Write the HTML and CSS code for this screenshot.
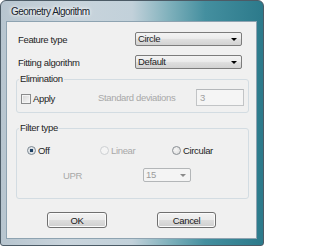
FILE: index.html
```html
<!DOCTYPE html>
<html>
<head>
<meta charset="utf-8">
<link rel="stylesheet" href="styles.css">
</head>
<body>
<div class="window">
  <div class="titlebar"><span class="title">Geometry Algorithm</span></div>
  <div class="client">
    <div class="field-row">
      <span class="label">Feature type</span>
      <div class="combo"><span>Circle</span><i class="arrow"></i></div>
    </div>
    <div class="field-row second">
      <span class="label">Fitting algorithm</span>
      <div class="combo"><span>Default</span><i class="arrow"></i></div>
    </div>
    <fieldset class="group elim">
      <legend>Elimination</legend>
      <div class="elim-row">
        <span class="check"><span class="box"></span><span>Apply</span></span>
        <span class="disabled std">Standard deviations</span>
        <div class="textbox">3</div>
      </div>
    </fieldset>
    <fieldset class="group filter">
      <legend>Filter type</legend>
      <div class="radio-row">
        <span class="radio-item"><span class="radio checked"></span><span>Off</span></span>
        <span class="radio-item disabled"><span class="radio dis"></span><span>Linear</span></span>
        <span class="radio-item"><span class="radio"></span><span>Circular</span></span>
      </div>
      <div class="upr-row">
        <span class="disabled upr">UPR</span>
        <div class="combo small off"><span>15</span><i class="arrow"></i></div>
      </div>
    </fieldset>
    <div class="buttons">
      <div class="btn ok">OK</div>
      <div class="btn cancel">Cancel</div>
    </div>
  </div>
</div>
</body>
</html>
```

FILE: styles.css
```css
* { box-sizing: border-box; }
html, body { margin: 0; padding: 0; }
body {
  width: 264px;
  height: 246px;
  overflow: hidden;
  font-family: "Liberation Sans", Arial, sans-serif;
  font-size: 9.5px;
  letter-spacing: -0.35px;
  color: #1e1e1e;
}
.window {
  width: 264px;
  height: 246px;
  border: 1px solid #4c5b66;
  border-radius: 6px 6px 3px 3px;
  padding: 0 6px 6px 5px;
  display: flex;
  flex-direction: column;
  background:
    linear-gradient(90deg, #b7c5cf 0%, #c9d4dc 25%, #c2d1da 50%, #80b1bc 64%, #448f9f 78%, #2c7a8b 100%);
}
.titlebar {
  height: 20px;
  display: flex;
  align-items: center;
  padding-left: 5px;
  padding-top: 1px;
}
.title {
  font-size: 10px;
  letter-spacing: -0.55px;
  color: #17232c;
  text-shadow: 0 0 5px #ffffff, 0 0 3px #ffffff;
}
.client {
  flex: 1;
  background: #f0f0f0;
  border: 1px solid #8ea3b1;
  padding: 10px 7px 0 9px;
}
.field-row {
  display: grid;
  grid-template-columns: 119px 107px;
  align-items: center;
  height: 14px;
}
.field-row.second { margin-top: 9px; }
.label { padding-left: 2px; }
.combo {
  height: 14px;
  border: 1px solid #7c7c7c;
  border-radius: 2px;
  background: linear-gradient(#f3f3f3 0%, #ececec 45%, #dedede 55%, #d2d2d2 100%);
  display: flex;
  align-items: center;
  justify-content: space-between;
  padding: 0 4px 0 2px;
  line-height: 12px;
}
.arrow {
  width: 0;
  height: 0;
  border-left: 3px solid transparent;
  border-right: 3px solid transparent;
  border-top: 3px solid #000;
}
.combo.small { width: 48px; }
.combo.off {
  background: #f4f4f4;
  border-color: #b3b6b8;
  color: #9c9c9c;
}
.combo.off .arrow { border-top-color: #8a8a8a; }

.group {
  margin: 0;
  border: 1px solid #d3dce2;
  border-radius: 3px;
  min-inline-size: 0;
}
.group legend {
  padding: 0 1px;
  margin-left: -2px;
  line-height: 10px;
}
.elim { margin-top: 5px; padding: 5px 4px 6px 4px; }
.filter { margin-top: 10px; padding: 12px 4px 16px 4px; }

.elim-row {
  display: flex;
  align-items: center;
  height: 17px;
}
.check {
  width: 77px;
  display: flex;
  align-items: center;
  gap: 2px;
  padding-top: 2px;
}
.box {
  width: 10px;
  height: 10px;
  border: 1px solid #8b8c8d;
  background: linear-gradient(135deg, #d5d5d5 0%, #eaeaea 60%, #f8f8f8 100%);
  box-shadow: inset 0 0 0 1px #f4f4f4;
}
.disabled { color: #a8a8a8; }
.std { flex: 1; }
.textbox {
  width: 48px;
  height: 17px;
  border: 1px solid #c2c4c6;
  border-top-color: #b5b8bb;
  background: #f5f5f5;
  color: #a0a0a0;
  padding: 2px 0 0 3px;
}

.radio-row {
  display: grid;
  grid-template-columns: 73px 72px auto;
  padding-left: 6px;
  height: 11px;
  align-items: center;
}
.radio-item {
  display: flex;
  align-items: center;
  gap: 2px;
}
.radio {
  width: 9px;
  height: 9px;
  border-radius: 50%;
  border: 1px solid #8a8f94;
  background: radial-gradient(circle at 40% 40%, #f6f6f6 0%, #dadada 100%);
}
.radio.checked {
  background: radial-gradient(circle, #17416a 0%, #1f3f5f 30%, #d8dde2 38%, #eef0f2 100%);
  border-color: #7b8791;
}
.radio.dis {
  border-color: #cdd0d3;
  background: #f4f4f4;
}
.upr-row {
  margin-top: 12px;
  display: flex;
  align-items: center;
  height: 14px;
  padding-left: 42px;
}
.upr { width: 80px; }

.buttons {
  margin-top: 13px;
  display: flex;
  padding-left: 31px;
  gap: 50px;
}
.btn {
  height: 16px;
  border: 1px solid #707070;
  border-radius: 3px;
  background: linear-gradient(#f2f2f2 0%, #ebebeb 48%, #dddddd 52%, #cfcfcf 100%);
  box-shadow: inset 0 0 0 1px #fbfbfb;
  display: flex;
  align-items: center;
  justify-content: center;
  color: #1a1a1a;
}
.ok { width: 60px; }
.cancel { width: 59px; }
```
